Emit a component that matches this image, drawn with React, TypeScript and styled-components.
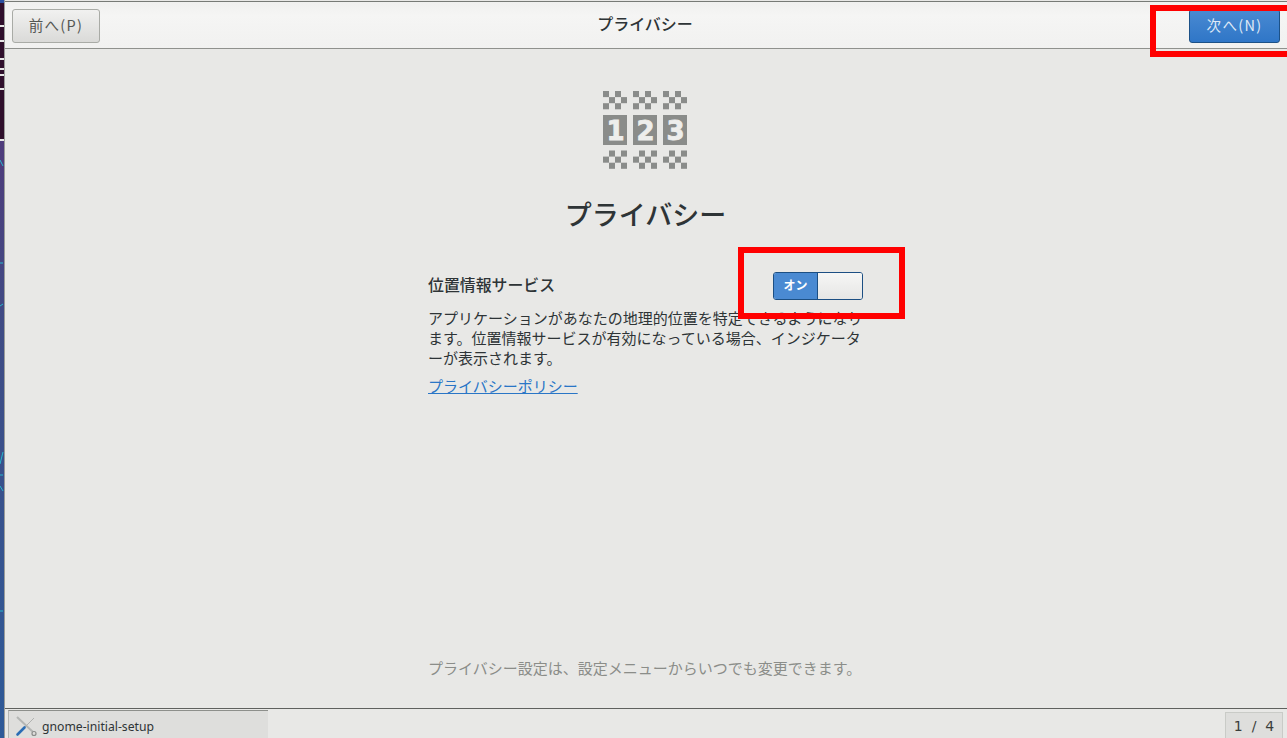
import React from "react";
import styled, { createGlobalStyle } from "styled-components";

const CJK = `"Noto Sans CJK JP", "Noto Sans", sans-serif`;

const Global = createGlobalStyle`
  html, body { margin: 0; padding: 0; height: 100%; overflow: hidden; background: #e8e8e6; }
  #root { height: 100%; }
  * { box-sizing: border-box; }
`;

const Screen = styled.div`
  position: relative;
  display: flex;
  width: 1287px;
  height: 738px;
  overflow: hidden;
  font-family: ${CJK};
  color: #2e3436;
`;

const Strip = styled.svg`
  flex: none;
  width: 5px;
  height: 738px;
  display: block;
`;

const Main = styled.div`
  flex: 1;
  min-width: 0;
  display: flex;
  flex-direction: column;
`;

const Header = styled.header`
  flex: none;
  height: 48px;
  margin-top: 1px;
  display: flex;
  align-items: center;
  justify-content: space-between;
  padding: 6px 7px 5px 7px;
  background: linear-gradient(#f0f0ef, #f5f5f4 30%, #f1f1f0);
  border-top: 1px solid #777a76;
  border-bottom: 1px solid #8f918d;
`;

const HeaderTitle = styled.div`
  font-size: 16px;
  line-height: 20px;
  font-weight: 500;
  color: #2e3436;
  margin: 0 0 6px 1px;
`;

const NavButton = styled.button<{ $primary?: boolean }>`
  width: ${(p) => (p.$primary ? "91px" : "88px")};
  height: 34px;
  padding: 0 0 2px;
  font-family: ${CJK};
  font-size: 14.5px;
  font-weight: 400;
  letter-spacing: 1.3px;
  border-radius: 3px;
  color: ${(p) => (p.$primary ? "#dfe9f6" : "#555753")};
  border: 1px solid ${(p) => (p.$primary ? "#1c5187" : "#a9aba6")};
  background: ${(p) =>
    p.$primary
      ? "linear-gradient(#4a8ad2, #2f76c7)"
      : "linear-gradient(#f1f1f0, #dadad8)"};
`;

const Body = styled.main`
  flex: 1;
  min-height: 0;
  display: flex;
  flex-direction: column;
  align-items: center;
  padding-right: 1px;
  background: #e8e8e6;
`;

const Column = styled.div`
  width: 435px;
  flex: 1;
  display: flex;
  flex-direction: column;
`;

const Logo = styled.svg`
  display: block;
  flex: none;
  width: 84px;
  height: 78px;
  margin: 42px 0 0 175px;
`;

const Heading = styled.h1`
  margin: 26px 0 0;
  text-align: center;
  font-size: 27px;
  line-height: 38px;
  font-weight: 500;
  color: #2e3436;
`;

const SettingRow = styled.div`
  display: flex;
  align-items: center;
  justify-content: space-between;
  margin-top: 39px;
  height: 28px;
`;

const Label = styled.div`
  font-size: 15.9px;
  line-height: 24px;
  font-weight: 500;
  margin-bottom: 2px;
`;

const Toggle = styled.div`
  width: 90px;
  height: 28px;
  display: flex;
  border: 1px solid #1c4f83;
  border-radius: 3px;
  overflow: hidden;
`;

const ToggleOn = styled.div`
  width: 43px;
  background: #4a8ad2;
  color: #fff;
  font-size: 12px;
  font-weight: 700;
  display: flex;
  align-items: center;
  justify-content: center;
  padding-bottom: 3px;
`;

const ToggleKnob = styled.div`
  flex: 1;
  border-left: 1px solid #1c4f83;
  background: linear-gradient(#f6f6f5, #e6e6e5);
`;

const Description = styled.p`
  margin: 8px 0 0;
  font-size: 15px;
  line-height: 20px;
  color: #2e3436;
`;

const PolicyLink = styled.a`
  display: block;
  margin-top: 8px;
  font-size: 15px;
  line-height: 20px;
  color: #2a76c6;
  text-decoration: underline;
`;

const Footnote = styled.div`
  margin-top: auto;
  margin-bottom: 30px;
  font-size: 15px;
  line-height: 20px;
  color: #8b8d89;
  white-space: nowrap;
`;

const TaskBar = styled.footer`
  flex: none;
  height: 30px;
  display: flex;
  justify-content: space-between;
  padding: 1px 4px 0 3px;
  background: #e8e8e6;
  border-top: 1px solid #5f615e;
`;

const TaskButton = styled.div`
  width: 260px;
  display: flex;
  align-items: center;
  gap: 5px;
  padding: 3px 0 0 6px;
  background: #dededc;
  border-top: 1px solid #8d8f8b;
  border-left: 1px solid #b5b7b3;
  font-family: "Noto Sans", sans-serif;
  font-size: 12.2px;
  color: #2e3436;
`;

const Pager = styled.div`
  width: 58px;
  margin-top: 2px;
  display: flex;
  align-items: center;
  justify-content: center;
  gap: 9px;
  background: #dededc;
  border: 1px solid #c9cbc7;
  border-bottom: 0;
  font-family: "DejaVu Sans", sans-serif;
  font-size: 14px;
  color: #3a3d3b;
`;

const Callout = styled.div<{ $x: number; $y: number; $w: number; $h: number }>`
  position: absolute;
  left: ${(p) => p.$x}px;
  top: ${(p) => p.$y}px;
  width: ${(p) => p.$w}px;
  height: ${(p) => p.$h}px;
  border: 6px solid #ff0000;
  pointer-events: none;
`;

const Checker = ({ x, y, invert }: { x: number; y: number; invert?: boolean }) => {
  const cells: React.ReactElement[] = [];
  for (let r = 0; r < 3; r++) {
    for (let c = 0; c < 4; c++) {
      const on = (r + c) % 2 === (invert ? 1 : 0);
      if (on) cells.push(<rect key={`${r}-${c}`} x={x + c * 6} y={y + r * 6.1} width={6} height={6.1} fill="#8a8c8a" />);
    }
  }
  return <g>{cells}</g>;
};

const DIGITS = ["1", "2", "3"];
const COLS = [0, 30, 60];

const App = () => (
  <Screen>
    <Global />
    <Strip viewBox="0 0 5 738">
      <defs>
        <linearGradient id="wall" x1="0" y1="0" x2="0" y2="1">
          <stop offset="0" stopColor="#5a2f74" />
          <stop offset="0.45" stopColor="#3f4c85" />
          <stop offset="1" stopColor="#2e5a98" />
        </linearGradient>
      </defs>
      <rect width="5" height="738" fill="url(#wall)" />
      <rect width="5" height="140" fill="#2f0f2c" />
      <rect x="0" y="0" width="4" height="3" fill="#2a4fa0" />
      {[25, 40, 58, 68, 74, 88, 139].map((y) => (
        <rect key={y} x="0" y={y} width="4" height="2" fill="#e6e6e6" />
      ))}
      <g stroke="#26b6cc" strokeWidth="1" fill="none">
        <path d="M0 160 L3 166" />
        <path d="M0 263 H3" />
        <path d="M0 306 L3 304" />
        <path d="M0 464 L3 452" />
        <path d="M0 475 H3" />
        <path d="M0 486 L3 491" />
        <path d="M0 611 H3" />
      </g>
      <rect x="4" width="1" height="738" fill="#9a9c99" />
    </Strip>
    <Main>
      <Header>
        <NavButton>前へ(P)</NavButton>
        <HeaderTitle>プライバシー</HeaderTitle>
        <NavButton $primary>次へ(N)</NavButton>
      </Header>
      <Body>
        <Column>
          <Logo viewBox="0 0 84 78">
            {COLS.map((x) => (
              <Checker key={`t${x}`} x={x} y={0} />
            ))}
            {COLS.map((x, i) => (
              <g key={x}>
                <rect x={x} y={24} width={24} height={30} fill="#8a8c8a" />
                <text
                  x={x + 12.5}
                  y={48.5}
                  textAnchor="middle"
                  fontFamily="'DejaVu Sans', sans-serif"
                  fontWeight={700}
                  fontSize={26}
                  fill="#eeeeec"
                  stroke="#eeeeec"
                  strokeWidth={0.8}
                >
                  {DIGITS[i]}
                </text>
              </g>
            ))}
            {COLS.map((x) => (
              <Checker key={`b${x}`} x={x} y={59.5} invert />
            ))}
          </Logo>
          <Heading>プライバシー</Heading>
          <SettingRow>
            <Label>位置情報サービス</Label>
            <Toggle>
              <ToggleOn>オン</ToggleOn>
              <ToggleKnob />
            </Toggle>
          </SettingRow>
          <Description>
            アプリケーションがあなたの地理的位置を特定できるようになります。位置情報サービスが有効になっている場合、インジケーターが表示されます。
          </Description>
          <PolicyLink href="#">プライバシーポリシー</PolicyLink>
          <Footnote>プライバシー設定は、設定メニューからいつでも変更できます。</Footnote>
        </Column>
      </Body>
      <TaskBar>
        <TaskButton>
          <svg width="22" height="22" viewBox="0 0 22 22">
            <path d="M2 2 L18 17" stroke="#b4b6b4" strokeWidth="2" />
            <circle cx="19" cy="18.5" r="2" fill="none" stroke="#8a8c8a" strokeWidth="1.2" />
            <path d="M19 3 L9 13" stroke="#b0b2b0" strokeWidth="1" />
            <path d="M9.5 12.5 L2.5 19.5" stroke="#2a6db5" strokeWidth="2.6" strokeLinecap="round" />
          </svg>
          gnome-initial-setup
        </TaskButton>
        <Pager>
          <span>1</span>
          <span>/</span>
          <span>4</span>
        </Pager>
      </TaskBar>
    </Main>
    <Callout $x={1150} $y={5} $w={143} $h={52} />
    <Callout $x={738} $y={247} $w={167} $h={72} />
  </Screen>
);

export default App;
